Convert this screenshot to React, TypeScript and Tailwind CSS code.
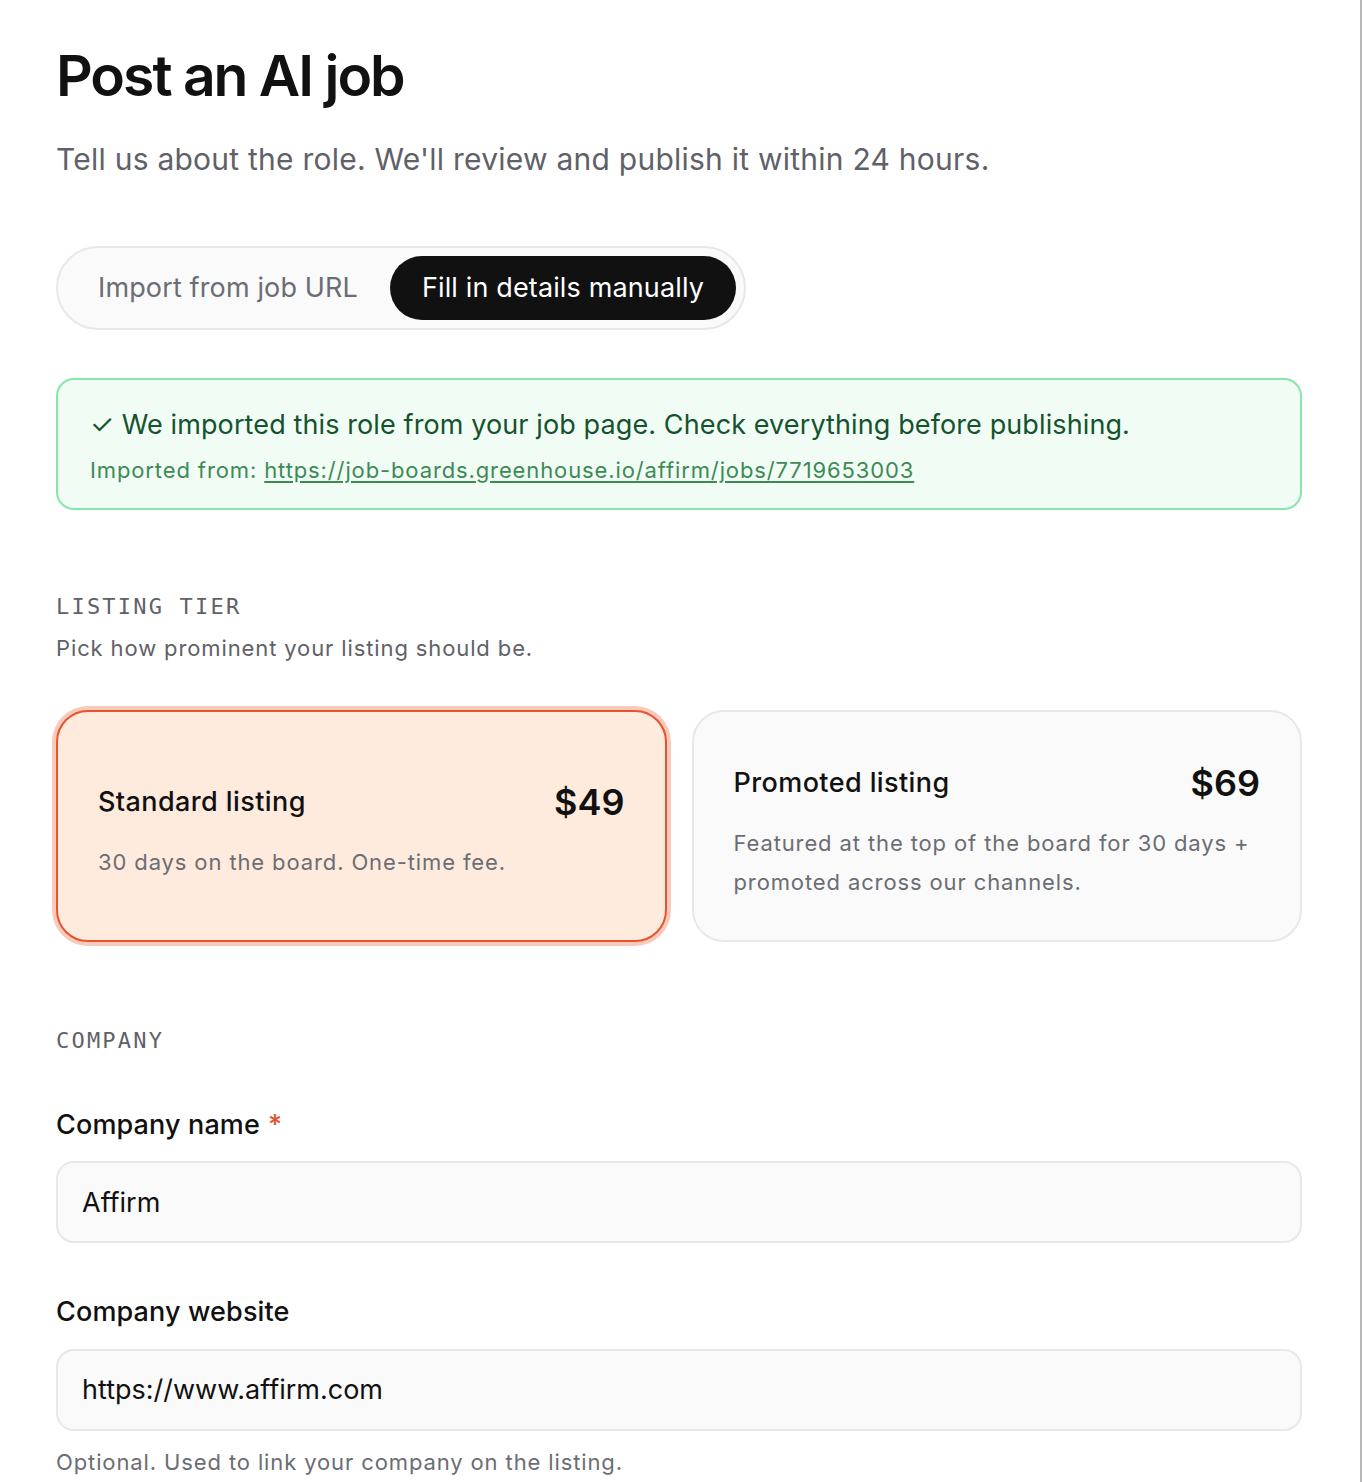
import { useState } from "react";

type Tier = "standard" | "promoted";

const tiers: { id: Tier; name: string; price: string; blurb: string }[] = [
  {
    id: "standard",
    name: "Standard listing",
    price: "$49",
    blurb: "30 days on the board. One-time fee.",
  },
  {
    id: "promoted",
    name: "Promoted listing",
    price: "$69",
    blurb: "Featured at the top of the board for 30 days + promoted across our channels.",
  },
];

function SectionLabel({ children }: { children: React.ReactNode }) {
  return (
    <h2 className="font-['DejaVu_Sans_Mono',monospace] text-[22px] tracking-[0.1em] text-[#5f6168] uppercase">
      {children}
    </h2>
  );
}

function Field({
  label,
  value,
  required,
  hint,
}: {
  label: string;
  value: string;
  required?: boolean;
  hint?: string;
}) {
  return (
    <div>
      <label className="block text-[27px] font-medium tracking-[0.005em] text-[#111]">
        {label}
        {required && <span className="ml-2 text-[#e5532f]">*</span>}
      </label>
      <input
        defaultValue={value}
        className="mt-4 h-[82px] w-full rounded-[18px] border-2 border-[#e8e8e8] bg-[#fafafa] px-[24px] text-[27px] text-[#111] outline-none"
      />
      {hint && (
        <p className="mt-[15px] text-[22px] tracking-[0.04em] text-[#6b6d74]">{hint}</p>
      )}
    </div>
  );
}

export default function App() {
  const [mode, setMode] = useState<"url" | "manual">("manual");
  const [tier, setTier] = useState<Tier>("standard");

  return (
    <div className="min-h-screen border-r-2 border-[#b8b8b8] bg-white font-['Inter',sans-serif]">
      <div className="pl-[56px] pr-[58px] pt-[40px] pb-6">
        <h1 className="text-[57px] font-semibold tracking-[-0.035em] leading-tight text-[#111]">
          Post an AI job
        </h1>
        <p className="mt-[26px] text-[30px] tracking-[0.008em] text-[#5f6168]">
          Tell us about the role. We'll review and publish it within 24 hours.
        </p>

        {/* import / manual switch */}
        <div className="mt-[64px] inline-flex items-center rounded-full border-2 border-[#e8e8e8] bg-[#fafafa] p-[8px]">
          <button
            onClick={() => setMode("url")}
            className={
              mode === "url"
                ? "h-[64px] rounded-full bg-[#111] px-[32px] text-[27px] tracking-[0.005em] text-white"
                : "h-[64px] rounded-full px-[32px] text-[27px] tracking-[0.005em] text-[#6b6d74]"
            }
          >
            Import from job URL
          </button>
          <button
            onClick={() => setMode("manual")}
            className={
              mode === "manual"
                ? "h-[64px] rounded-full bg-[#111] px-[32px] text-[27px] tracking-[0.005em] text-white"
                : "h-[64px] rounded-full px-[32px] text-[27px] tracking-[0.005em] text-[#6b6d74]"
            }
          >
            Fill in details manually
          </button>
        </div>

        <div className="mt-[48px] rounded-[18px] border-2 border-[#86e8a8] bg-[#f0fcf4] px-[32px] pt-[25px] pb-[21px]">
          <p className="text-[27px] tracking-[0.004em] text-[#14532d]">
            ✓ We imported this role from your job page. Check everything before publishing.
          </p>
          <p className="mt-[8px] text-[22px] tracking-[0.04em] text-[#3d8a55]">
            Imported from:{" "}
            <a href="#" className="underline underline-offset-[3px]">
              https://job-boards.greenhouse.io/affirm/jobs/7719653003
            </a>
          </p>
        </div>

        <section className="mt-[80px]">
          <SectionLabel>Listing tier</SectionLabel>
          <p className="mt-[9px] text-[22px] tracking-[0.04em] text-[#5f6168]">
            Pick how prominent your listing should be.
          </p>

          <div className="mt-[45px] grid grid-cols-2 gap-[25px]">
            {tiers.map((t) => {
              const active = tier === t.id;
              return (
                <button
                  key={t.id}
                  onClick={() => setTier(t.id)}
                  className={
                    active
                      ? "flex h-[232px] flex-col justify-center rounded-[32px] border-2 border-[#e5532f] bg-[#ffebdd] px-[40px] pt-[6px] text-left ring-4 ring-[#f9c9bb]"
                      : "flex h-[232px] flex-col justify-center rounded-[32px] border-2 border-[#e8e8e8] bg-[#fafafa] px-[40px] pt-[6px] text-left"
                  }
                >
                  <div className="flex items-center justify-between">
                    <span className="text-[27px] font-medium tracking-[0.015em] text-[#111]">
                      {t.name}
                    </span>
                    <span className="text-[36px] font-semibold text-[#111]">{t.price}</span>
                  </div>
                  <p className="mt-[14px] text-[22px] leading-[39px] tracking-[0.04em] text-[#6b6d74]">
                    {t.blurb}
                  </p>
                </button>
              );
            })}
          </div>
        </section>

        <section className="mt-[82px]">
          <SectionLabel>Company</SectionLabel>
          <div className="mt-[48px] flex flex-col gap-[49px]">
            <Field label="Company name" value="Affirm" required />
            <Field
              label="Company website"
              value="https://www.affirm.com"
              hint="Optional. Used to link your company on the listing."
            />
          </div>
        </section>
      </div>
    </div>
  );
}
